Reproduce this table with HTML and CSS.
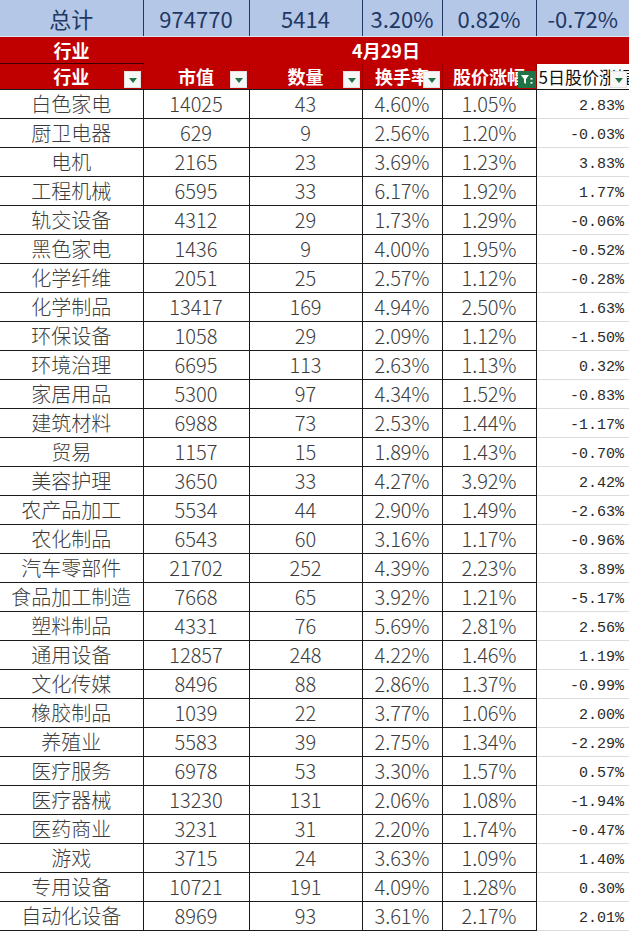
FILE: index.html
```html
<!DOCTYPE html>
<html lang="zh-CN">
<head>
<meta charset="utf-8">
<title>行业统计</title>
<link rel="stylesheet" href="styles.css">
</head>
<body>
<table class="sheet">
  <colgroup>
    <col class="c1"><col class="c2"><col class="c3"><col class="c4"><col class="c5"><col class="c6">
  </colgroup>
  <tbody>
    <tr class="total">
      <td>总计</td><td>974770</td><td>5414</td><td>3.20%</td><td>0.82%</td><td>-0.72%</td>
    </tr>
    <tr class="head1">
      <td class="h-ind">行业</td><td colspan="5">4月29日</td>
    </tr>
    <tr class="head2">
      <td><span class="ht">行业</span><span class="dd"></span></td>
      <td><span class="ht">市值</span><span class="dd"></span></td>
      <td><span class="ht">数量</span><span class="dd"></span></td>
      <td><span class="ht">换手率</span><span class="dd"></span></td>
      <td><span class="ht">股价涨幅</span><span class="flt"><svg viewBox="0 0 18 17" width="18" height="17"><rect width="18" height="17" fill="#217346"/><path d="M3 4h8l-3 4v5l-2-1.2V8z" fill="#fff"/><rect x="12.5" y="7" width="2" height="1.6" fill="#fff"/><rect x="12.5" y="11" width="2" height="1.6" fill="#fff"/></svg></span></td>
      <td class="h-last"><span class="ht">5日股价涨幅</span><span class="dd"></span></td>
    </tr>
    <tr><td>白色家电</td><td>14025</td><td>43</td><td>4.60%</td><td>1.05%</td><td class="r">2.83%</td></tr>
    <tr><td>厨卫电器</td><td>629</td><td>9</td><td>2.56%</td><td>1.20%</td><td class="r">-0.03%</td></tr>
    <tr><td>电机</td><td>2165</td><td>23</td><td>3.69%</td><td>1.23%</td><td class="r">3.83%</td></tr>
    <tr><td>工程机械</td><td>6595</td><td>33</td><td>6.17%</td><td>1.92%</td><td class="r">1.77%</td></tr>
    <tr><td>轨交设备</td><td>4312</td><td>29</td><td>1.73%</td><td>1.29%</td><td class="r">-0.06%</td></tr>
    <tr><td>黑色家电</td><td>1436</td><td>9</td><td>4.00%</td><td>1.95%</td><td class="r">-0.52%</td></tr>
    <tr><td>化学纤维</td><td>2051</td><td>25</td><td>2.57%</td><td>1.12%</td><td class="r">-0.28%</td></tr>
    <tr><td>化学制品</td><td>13417</td><td>169</td><td>4.94%</td><td>2.50%</td><td class="r">1.63%</td></tr>
    <tr><td>环保设备</td><td>1058</td><td>29</td><td>2.09%</td><td>1.12%</td><td class="r">-1.50%</td></tr>
    <tr><td>环境治理</td><td>6695</td><td>113</td><td>2.63%</td><td>1.13%</td><td class="r">0.32%</td></tr>
    <tr><td>家居用品</td><td>5300</td><td>97</td><td>4.34%</td><td>1.52%</td><td class="r">-0.83%</td></tr>
    <tr><td>建筑材料</td><td>6988</td><td>73</td><td>2.53%</td><td>1.44%</td><td class="r">-1.17%</td></tr>
    <tr><td>贸易</td><td>1157</td><td>15</td><td>1.89%</td><td>1.43%</td><td class="r">-0.70%</td></tr>
    <tr><td>美容护理</td><td>3650</td><td>33</td><td>4.27%</td><td>3.92%</td><td class="r">2.42%</td></tr>
    <tr><td>农产品加工</td><td>5534</td><td>44</td><td>2.90%</td><td>1.49%</td><td class="r">-2.63%</td></tr>
    <tr><td>农化制品</td><td>6543</td><td>60</td><td>3.16%</td><td>1.17%</td><td class="r">-0.96%</td></tr>
    <tr><td>汽车零部件</td><td>21702</td><td>252</td><td>4.39%</td><td>2.23%</td><td class="r">3.89%</td></tr>
    <tr><td>食品加工制造</td><td>7668</td><td>65</td><td>3.92%</td><td>1.21%</td><td class="r">-5.17%</td></tr>
    <tr><td>塑料制品</td><td>4331</td><td>76</td><td>5.69%</td><td>2.81%</td><td class="r">2.56%</td></tr>
    <tr><td>通用设备</td><td>12857</td><td>248</td><td>4.22%</td><td>1.46%</td><td class="r">1.19%</td></tr>
    <tr><td>文化传媒</td><td>8496</td><td>88</td><td>2.86%</td><td>1.37%</td><td class="r">-0.99%</td></tr>
    <tr><td>橡胶制品</td><td>1039</td><td>22</td><td>3.77%</td><td>1.06%</td><td class="r">2.00%</td></tr>
    <tr><td>养殖业</td><td>5583</td><td>39</td><td>2.75%</td><td>1.34%</td><td class="r">-2.29%</td></tr>
    <tr><td>医疗服务</td><td>6978</td><td>53</td><td>3.30%</td><td>1.57%</td><td class="r">0.57%</td></tr>
    <tr><td>医疗器械</td><td>13230</td><td>131</td><td>2.06%</td><td>1.08%</td><td class="r">-1.94%</td></tr>
    <tr><td>医药商业</td><td>3231</td><td>31</td><td>2.20%</td><td>1.74%</td><td class="r">-0.47%</td></tr>
    <tr><td>游戏</td><td>3715</td><td>24</td><td>3.63%</td><td>1.09%</td><td class="r">1.40%</td></tr>
    <tr><td>专用设备</td><td>10721</td><td>191</td><td>4.09%</td><td>1.28%</td><td class="r">0.30%</td></tr>
    <tr><td>自动化设备</td><td>8969</td><td>93</td><td>3.61%</td><td>2.17%</td><td class="r">2.01%</td></tr>
  </tbody>
</table>
</body>
</html>
```

FILE: styles.css
```css
html, body {
  margin: 0;
  padding: 0;
  background: #ffffff;
}

.sheet {
  border-collapse: collapse;
  table-layout: fixed;
  width: 629px;
  font-family: "Noto Sans CJK SC", "Noto Sans", sans-serif;
}

.c1 { width: 143px; }
.c2 { width: 106px; }
.c3 { width: 113px; }
.c4 { width: 80px; }
.c5 { width: 94px; }
.c6 { width: 93px; }

.sheet td {
  padding: 0;
  text-align: center;
  white-space: nowrap;
  overflow: hidden;
  height: 28px;
  font-size: 20px;
  font-weight: 300;
  color: #3c3c3c;
  line-height: 26px;
  border: 1px solid #1a1a1a;
}

/* total row */
.total td {
  height: 36px;
  background: #b4c7e7;
  color: #1f3864;
  font-size: 22px;
  font-weight: 400;
  line-height: 30px;
  border-top: none;
  border-left: 1px solid #1f3864;
  border-right: 1px solid #1f3864;
  border-bottom: 1px solid #dfe6f3;
}
.total td:first-child { border-left: none; }
.total td:last-child { border-right: none; }

/* red header rows */
.head1 td, .head2 td {
  background: #c00000;
  color: #ffffff;
  font-weight: 700;
  font-size: 18px;
  height: 25px;
  line-height: 25px;
  border: none;
  overflow: visible;
}
.head1 td { padding-top: 1px; }
.head1 .h-ind { border-bottom: 1px solid #3a0000; }

.head2 td {
  position: relative;
  border-right: 1px solid #9a0000;
  border-bottom: 1px solid #1a1a1a;
}
.head2 td:first-child { border-left: none; }

.head2 .ht {
  display: block;
}

.head2 .h-last {
  background: #ffffff;
  color: #111111;
  font-weight: 400;
  text-align: left;
  font-size: 17px;
  overflow: hidden;
  border-left: 1px solid #1a1a1a;
  border-right: none;
}
.head2 .h-last .ht { padding-left: 2px; }

.dd {
  position: absolute;
  right: 2px;
  bottom: 1px;
  width: 17px;
  height: 17px;
  background: #f7f7f7;
  box-sizing: border-box;
  border: 1px solid #e2e2e2;
}
.dd::after {
  content: "";
  position: absolute;
  left: 4px;
  top: 6px;
  border-top: 5px solid #217346;
  border-left: 4px solid transparent;
  border-right: 4px solid transparent;
}

.flt {
  position: absolute;
  right: 0;
  bottom: 1px;
  width: 18px;
  height: 17px;
  line-height: 0;
}

/* data rows */
.sheet tr td:first-child { border-left: none; }

.sheet td.r {
  text-align: right;
  padding-right: 5px;
  padding-top: 5px;
  height: 23px;
  line-height: 20px;
  font-family: "Liberation Mono", "DejaVu Sans Mono", monospace;
  font-size: 15px;
  font-weight: 400;
  color: #2a2a2a;
  border-top: 1px solid #dcdcdc;
  border-bottom: 1px solid #dcdcdc;
  border-right: none;
}
```
